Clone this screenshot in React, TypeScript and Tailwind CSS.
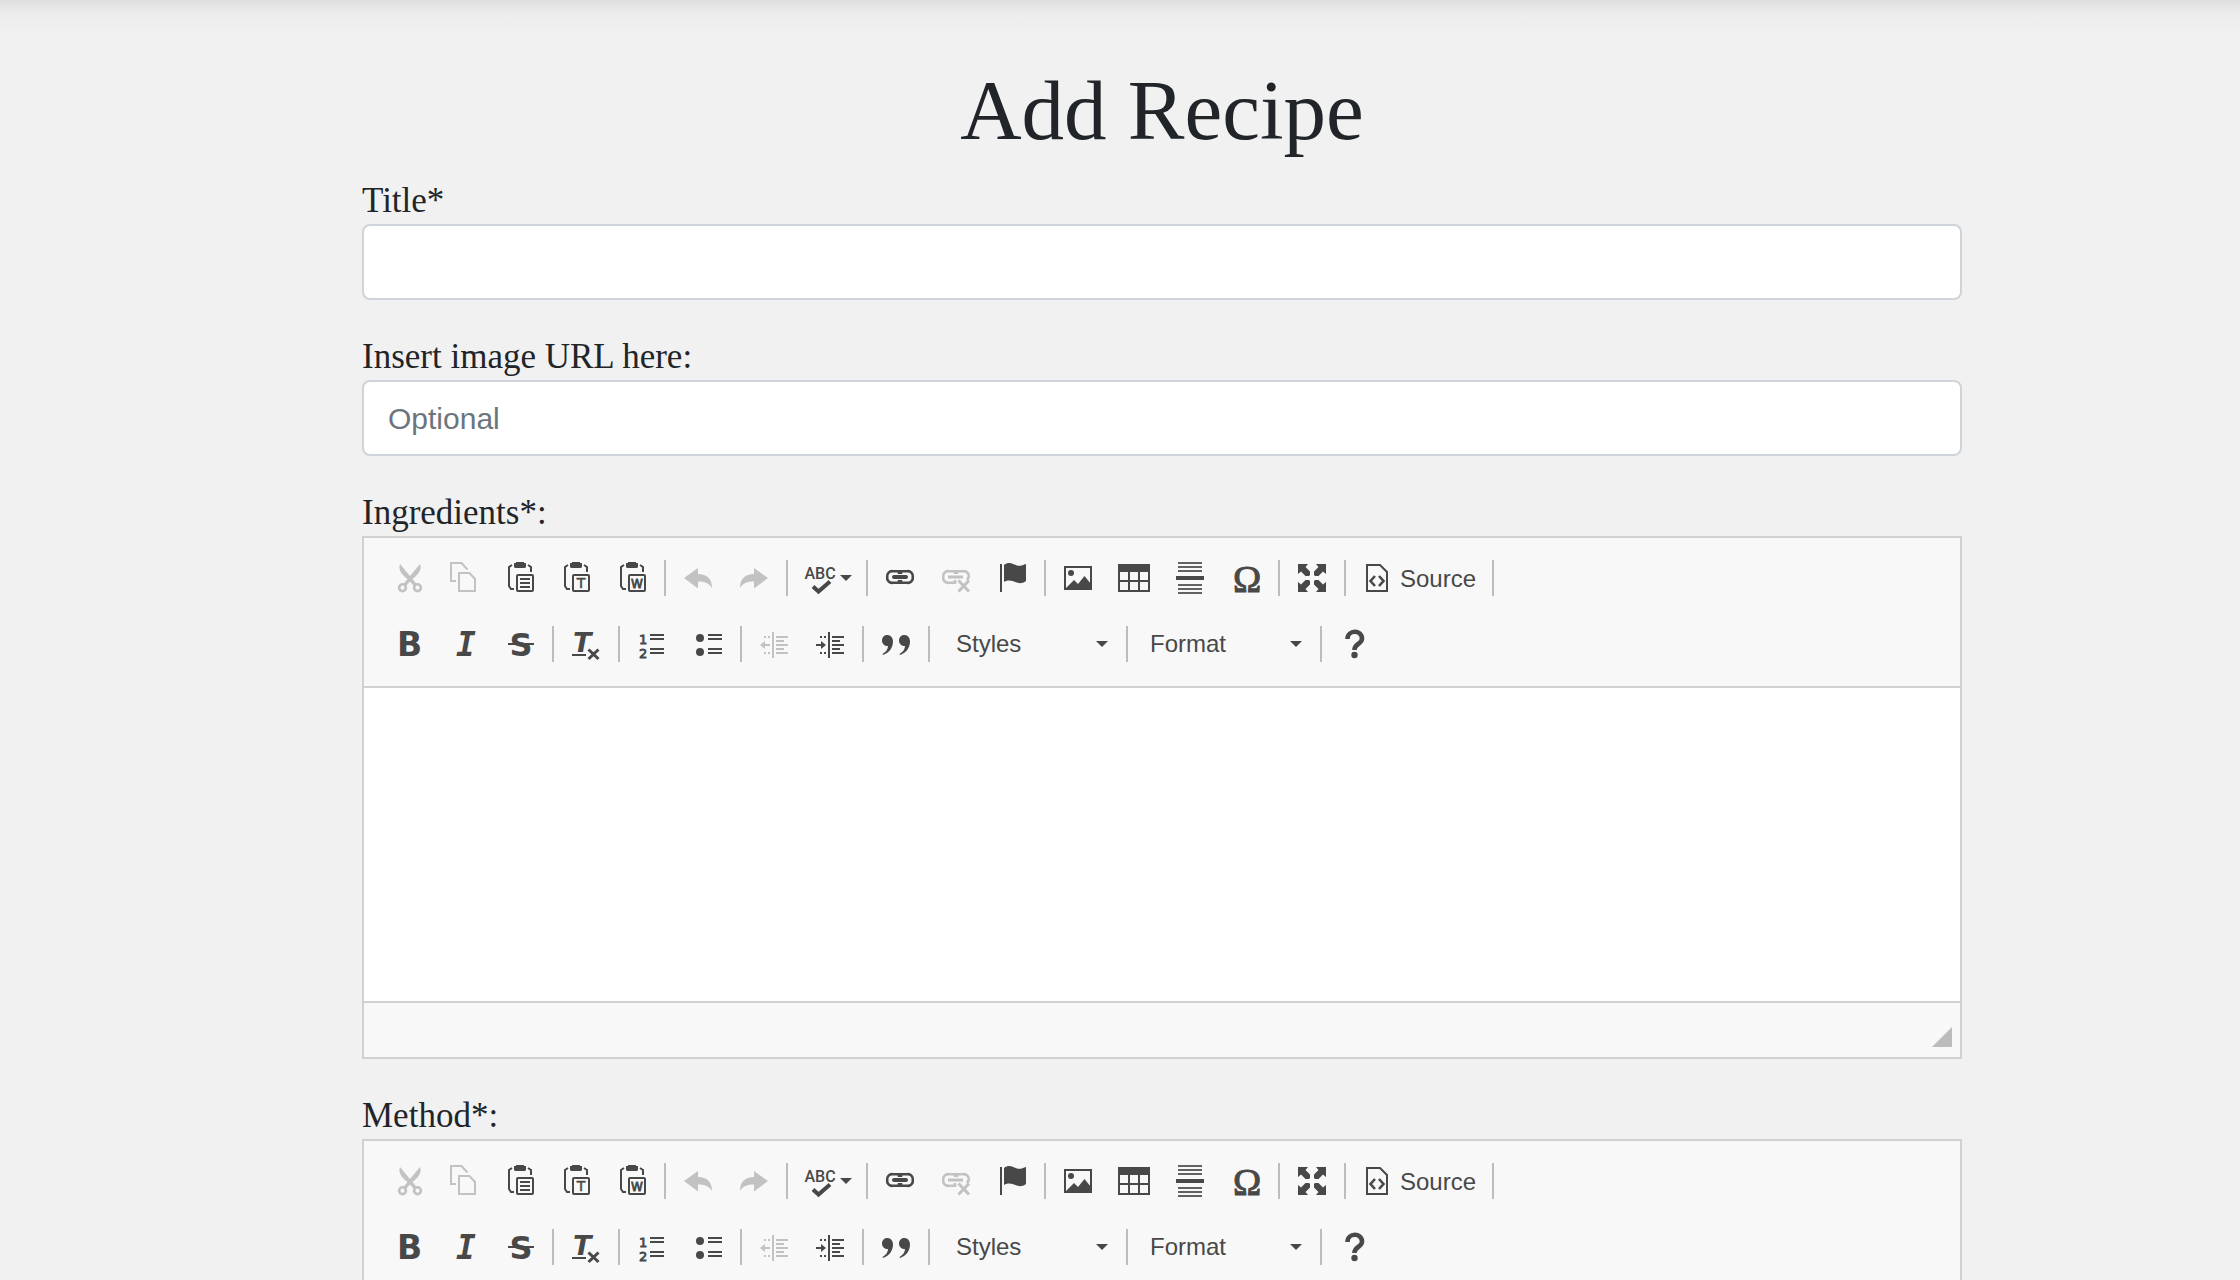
import type { ReactNode } from 'react';

const sans = '"DejaVu Sans", sans-serif';

function Icon({ children }: { children: ReactNode }) {
  return (
    <svg viewBox="0 0 32 32" className="size-8 shrink-0 overflow-visible" fill="currentColor" aria-hidden="true">
      {children}
    </svg>
  );
}

const Cut = () => (
  <Icon>
    <path d="M8 2C6 7 9 12 15.500 17L11.500 22L14 24L18 19.500L22 24L24.500 22L20.500 17C27 12 30 7 28 2L18 14Z" />
    <g fill="none" stroke="currentColor" strokeWidth="2.600">
      <circle cx="10.500" cy="25.700" r="3.400" />
      <circle cx="25.500" cy="25.700" r="3.400" />
    </g>
  </Icon>
);
const Copy = () => (
  <Icon>
    <path d="M8 19H3V1H13.500L19.500 7.500M11 11H21.500L27 17V29H11Z" fill="none" stroke="currentColor" strokeWidth="2" />
  </Icon>
);
const Clip = ({ children }: { children: ReactNode }) => (
  <Icon>
    <path d="M12 0H20V1H22V5L21 6H11L10 5V1H12Z" />
    <path d="M8 3L5 5V24L7 27H10M24 3L27 5V10" fill="none" stroke="currentColor" strokeWidth="2" />
    <rect x="13" y="13" width="16" height="16" rx="1" fill="none" stroke="currentColor" strokeWidth="2" />
    {children}
  </Icon>
);
const Paste = () => (
  <Clip>
    <path d="M16 16h10v2H16zM16 20h10v2H16zM16 24h10v2H16z" />
  </Clip>
);
const PasteText = () => (
  <Clip>
    <text x="21" y="26" fontFamily={sans} fontSize="14" textAnchor="middle" stroke="currentColor" strokeWidth=".5">T</text>
  </Clip>
);
const PasteWord = () => (
  <Clip>
    <text x="21" y="26" fontFamily={sans} fontSize="12" textAnchor="middle" stroke="currentColor" strokeWidth=".8">W</text>
  </Clip>
);
const undoPath = 'M2 16L16 6V12C25 12 30 17 30 26C27 21 23 19.500 16 19.500V26.500Z';
const Undo = () => <Icon><path d={undoPath} /></Icon>;
const Redo = () => <Icon><path d={undoPath} transform="matrix(-1 0 0 1 32 0)" /></Icon>;
const Spell = () => (
  <Icon>
    <text x="16" y="17" fontFamily='"Roboto", sans-serif' fontSize="16" fontWeight="500" textAnchor="middle">ABC</text>
    <path d="M9 24.500L14.500 29.500L26 19.500" fill="none" stroke="currentColor" strokeWidth="4" />
  </Icon>
);
const ringPath = 'M15 12V9.200H9A5 5 0 0 0 3.200 15A5 5 0 0 0 9 20.800H15V18';
const Link = () => (
  <Icon>
    <g fill="none" stroke="currentColor" strokeWidth="2.600">
      <path d={ringPath + 'M17 12V9.200H23A5 5 0 0 1 28.800 15A5 5 0 0 1 23 20.800H17V18'} />
      <rect x="8" y="13" width="16" height="4" rx="2" fill="currentColor" stroke="none" />
    </g>
  </Icon>
);
const Unlink = () => (
  <Icon>
    <g fill="none" stroke="currentColor" strokeWidth="2.600">
      <path d={ringPath + 'M17 12V9.200H23A5 5 0 0 1 28.800 15L27 18'} />
      <path d="M8 15H23" strokeWidth="3" />
      <path d="M18.500 18.500L29 29.500M29 18.500L18.500 29.500" strokeWidth="3" />
    </g>
  </Icon>
);
const Flag = () => (
  <Icon>
    <path d="M4 2h2v28H4zM8 3C13 -1 17 2 21 3.500C24 4.500 27 3 30 2V19C26 22 22 21.500 18 19.500C14 18 11 18 8 20Z" />
  </Icon>
);
const Picture = () => (
  <Icon>
    <rect x="3" y="5" width="26" height="22" fill="none" stroke="currentColor" strokeWidth="2" />
    <circle cx="9" cy="11" r="3" />
    <path d="M3 27L12 18L16 22L22.500 14L29 22V27Z" />
  </Icon>
);
const Table = () => (
  <Icon>
    <path fillRule="evenodd" d="M0 2H32V30H0ZM2 10V18H10V10ZM12 10V18H20V10ZM22 10V18H30V10ZM2 20V28H10V20ZM12 20V28H20V20ZM22 20V28H30V20Z" />
  </Icon>
);
const Rule = () => (
  <Icon>
    <path d="M2 14h28v4H2z" />
    <path opacity=".85" d="M4 0h24v2H4zM4 4h24v2H4zM4 8h24v2H4zM4 22h24v2H4zM4 26h24v2H4zM4 30h24v2H4z" />
  </Icon>
);
const Omega = () => (
  <Icon>
    <text x="17" y="30" fontFamily='"Liberation Serif", serif' fontSize="38" textAnchor="middle" stroke="currentColor" strokeWidth="1">Ω</text>
  </Icon>
);
const Maximize = () => (
  <Icon>
    {[0, 90, 180, 270].map((a) => (
      <path key={a} transform={`rotate(${a} 16 16)`} d="M2 2H12L9.500 5L14 9.500V13L13 14H9.500L5 9.500L2 12Z" />
    ))}
  </Icon>
);
const SourceIcon = () => (
  <Icon>
    <path d="M5 3H18L25 10V29H5Z" fill="none" stroke="currentColor" strokeWidth="2" />
    <path d="M13 14L8.500 19L13 24M17 14L21.500 19L17 24" fill="none" stroke="currentColor" strokeWidth="2.600" />
  </Icon>
);
const Bold = () => <Icon><text x="5" y="28" fontFamily={sans} fontSize="33" fontWeight="700">B</text></Icon>;
const Italic = () => (
  <Icon>
    <text x="8" y="28" fontFamily='"DejaVu Sans Mono", monospace' fontSize="33" fontWeight="700" fontStyle="italic">I</text>
  </Icon>
);
const Strike = () => (
  <Icon>
    <text x="17" y="28" fontFamily={sans} fontSize="32" fontWeight="700" textAnchor="middle">S</text>
    <path d="M4 15h26v2H4z" />
  </Icon>
);
const Clear = () => (
  <Icon>
    <text x="3" y="24" fontFamily={sans} fontSize="27" fontWeight="700" fontStyle="italic">T</text>
    <path d="M2 26h14v2H2z" />
    <path d="M18.500 21.500L28.500 31M28.500 21.500L18.500 31" stroke="currentColor" strokeWidth="3" />
  </Icon>
);
const Numbered = () => (
  <Icon>
    <text x="3" y="16" fontFamily={sans} fontSize="13" stroke="currentColor" strokeWidth=".8">1</text>
    <text x="3" y="30" fontFamily={sans} fontSize="13" stroke="currentColor" strokeWidth=".8">2</text>
    <path d="M14 6h14v2H14zM14 10h14v2H14zM14 20h14v2H14zM14 24h14v2H14z" />
  </Icon>
);
const Bulleted = () => (
  <Icon>
    <circle cx="8" cy="10" r="4" />
    <circle cx="8" cy="24" r="4" />
    <path d="M16 6h14v2H16zM16 10h14v2H16zM16 20h14v2H16zM16 24h14v2H16z" />
  </Icon>
);
const indentLines = 'M14 4h2v26h-2zM18 8h12v2H18zM18 12h8v2H18zM18 16h12v2H18zM18 20h8v2H18zM18 24h12v2H18zM6 8h2v2H6zM10 8h2v2h-2zM6 24h2v2H6zM10 24h2v2h-2z';
const Outdent = () => <Icon><path d={indentLines + 'M2 17L7 13V16H12V18H7V21Z'} /></Icon>;
const Indent = () => <Icon><path d={indentLines + 'M12 17L7 13V16H2V18H7V21Z'} /></Icon>;
const quotePath = 'M7.500 7C11 7 13 10 13 13.500C13 20 9 25 3 27L2.500 26C6 24 8 21 8 18C4.500 18 2 16 2 12.500C2 9 4.500 7 7.500 7Z';
const Quote = () => <Icon><path d={quotePath} /><path d={quotePath} transform="translate(17 0)" /></Icon>;
const Help = () => (
  <Icon>
    <path d="M9.500 11C9.500 1.500 24 1.500 24 10.500C24 16.500 16.500 15 16.500 22" fill="none" stroke="currentColor" strokeWidth="4.600" />
    <circle cx="16.500" cy="27" r="3.200" />
  </Icon>
);

const Caret = () => (
  <svg viewBox="0 0 12 6" className="h-1.5 w-3 shrink-0" fill="currentColor" aria-hidden="true"><path d="M0 0H12L6 6Z" /></svg>
);
const Sep = () => <span className="mx-1 h-9 w-0.5 bg-[#bcbcbc]" />;

function Tool({ label, icon, disabled }: { label: string; icon: ReactNode; disabled?: boolean }) {
  return (
    <button type="button" aria-label={label} disabled={disabled} className="flex h-14 w-14 items-center justify-center disabled:opacity-30">
      {icon}
    </button>
  );
}
function Combo({ label }: { label: string }) {
  return (
    <button type="button" aria-haspopup="listbox" className="flex h-14 w-46 items-center justify-between pr-3.5 pl-4.5 text-2xl">
      {label}
      <Caret />
    </button>
  );
}

function Editor({ label }: { label: string }) {
  return (
    <div role="group" aria-label={label} className="border-2 border-[#d1d1d1] bg-[#f8f8f8] font-['Liberation_Sans',Arial,sans-serif] text-[#484848]">
      <div role="toolbar" aria-label={label + ' toolbar'} className="flex flex-col gap-2.5 border-b-2 border-[#d1d1d1] px-4 pt-3 pb-3.5">
        <div className="flex items-center">
          <Tool label="Cut" icon={<Cut />} disabled />
          <Tool label="Copy" icon={<Copy />} disabled />
          <Tool label="Paste" icon={<Paste />} />
          <Tool label="Paste as plain text" icon={<PasteText />} />
          <Tool label="Paste from Word" icon={<PasteWord />} />
          <Sep />
          <Tool label="Undo" icon={<Undo />} disabled />
          <Tool label="Redo" icon={<Redo />} disabled />
          <Sep />
          <button type="button" aria-label="Spell check" className="flex h-14 w-[70px] items-center gap-1 pl-3">
            <Spell />
            <Caret />
          </button>
          <Sep />
          <Tool label="Link" icon={<Link />} />
          <Tool label="Unlink" icon={<Unlink />} disabled />
          <Tool label="Anchor" icon={<Flag />} />
          <Sep />
          <Tool label="Image" icon={<Picture />} />
          <Tool label="Table" icon={<Table />} />
          <Tool label="Insert horizontal line" icon={<Rule />} />
          <Tool label="Insert special character" icon={<Omega />} />
          <Sep />
          <Tool label="Maximize" icon={<Maximize />} />
          <Sep />
          <button type="button" className="flex h-14 items-center gap-1.5 px-3 text-2xl">
            <SourceIcon />
            <span className="pt-0.5">Source</span>
          </button>
          <Sep />
        </div>
        <div className="flex items-center">
          <Tool label="Bold" icon={<Bold />} />
          <Tool label="Italic" icon={<Italic />} />
          <Tool label="Strikethrough" icon={<Strike />} />
          <Sep />
          <Tool label="Remove format" icon={<Clear />} />
          <Sep />
          <Tool label="Numbered list" icon={<Numbered />} />
          <Tool label="Bulleted list" icon={<Bulleted />} />
          <Sep />
          <Tool label="Decrease indent" icon={<Outdent />} disabled />
          <Tool label="Increase indent" icon={<Indent />} />
          <Sep />
          <Tool label="Block quote" icon={<Quote />} />
          <Sep />
          <div className="pl-1"><Combo label="Styles" /></div>
          <Sep />
          <Combo label="Format" />
          <Sep />
          <Tool label="About" icon={<Help />} />
        </div>
      </div>
      <textarea aria-label={label} className="block h-[313px] w-full resize-none bg-white p-10 text-2xl outline-none" />
      <div className="flex h-14 items-end justify-end border-t-2 border-[#d1d1d1] px-2 pb-2.5">
        <svg viewBox="0 0 20 20" className="size-5" fill="#bcbcbc" aria-hidden="true"><path d="M20 0V20H0Z" /></svg>
      </div>
    </div>
  );
}

const labelClass = 'block h-12 text-[35px] leading-[50px]';
const inputClass =
  "block h-19 w-full rounded-lg border-2 border-[#ced4da] bg-white px-6 pt-0.5 font-['Liberation_Sans',Arial,sans-serif] text-[30px] text-[#495057] outline-none placeholder:text-[#6c757d]";

export default function App() {
  return (
    <div className="h-screen overflow-hidden bg-[#f1f1f1] font-['Liberation_Serif',Georgia,serif] text-[#212529]">
      <div className="h-9 bg-linear-to-b from-[#dfdfdf] via-[#ececec] via-35% to-[#f1f1f1]" />
      <main className="pr-[278px] pl-[362px]">
        <h1 className="pt-6 text-center text-[85px] leading-25">Add Recipe</h1>
        <form className="flex flex-col gap-8 pt-4">
          <div>
            <label htmlFor="title" className={labelClass}>Title*</label>
            <input id="title" type="text" className={inputClass} />
          </div>
          <div>
            <label htmlFor="image" className={labelClass}>Insert image URL here:</label>
            <input id="image" type="url" placeholder="Optional" className={inputClass} />
          </div>
          <div>
            <span className={labelClass}>Ingredients*:</span>
            <Editor label="Ingredients" />
          </div>
          <div>
            <span className={labelClass}>Method*:</span>
            <Editor label="Method" />
          </div>
        </form>
      </main>
    </div>
  );
}
